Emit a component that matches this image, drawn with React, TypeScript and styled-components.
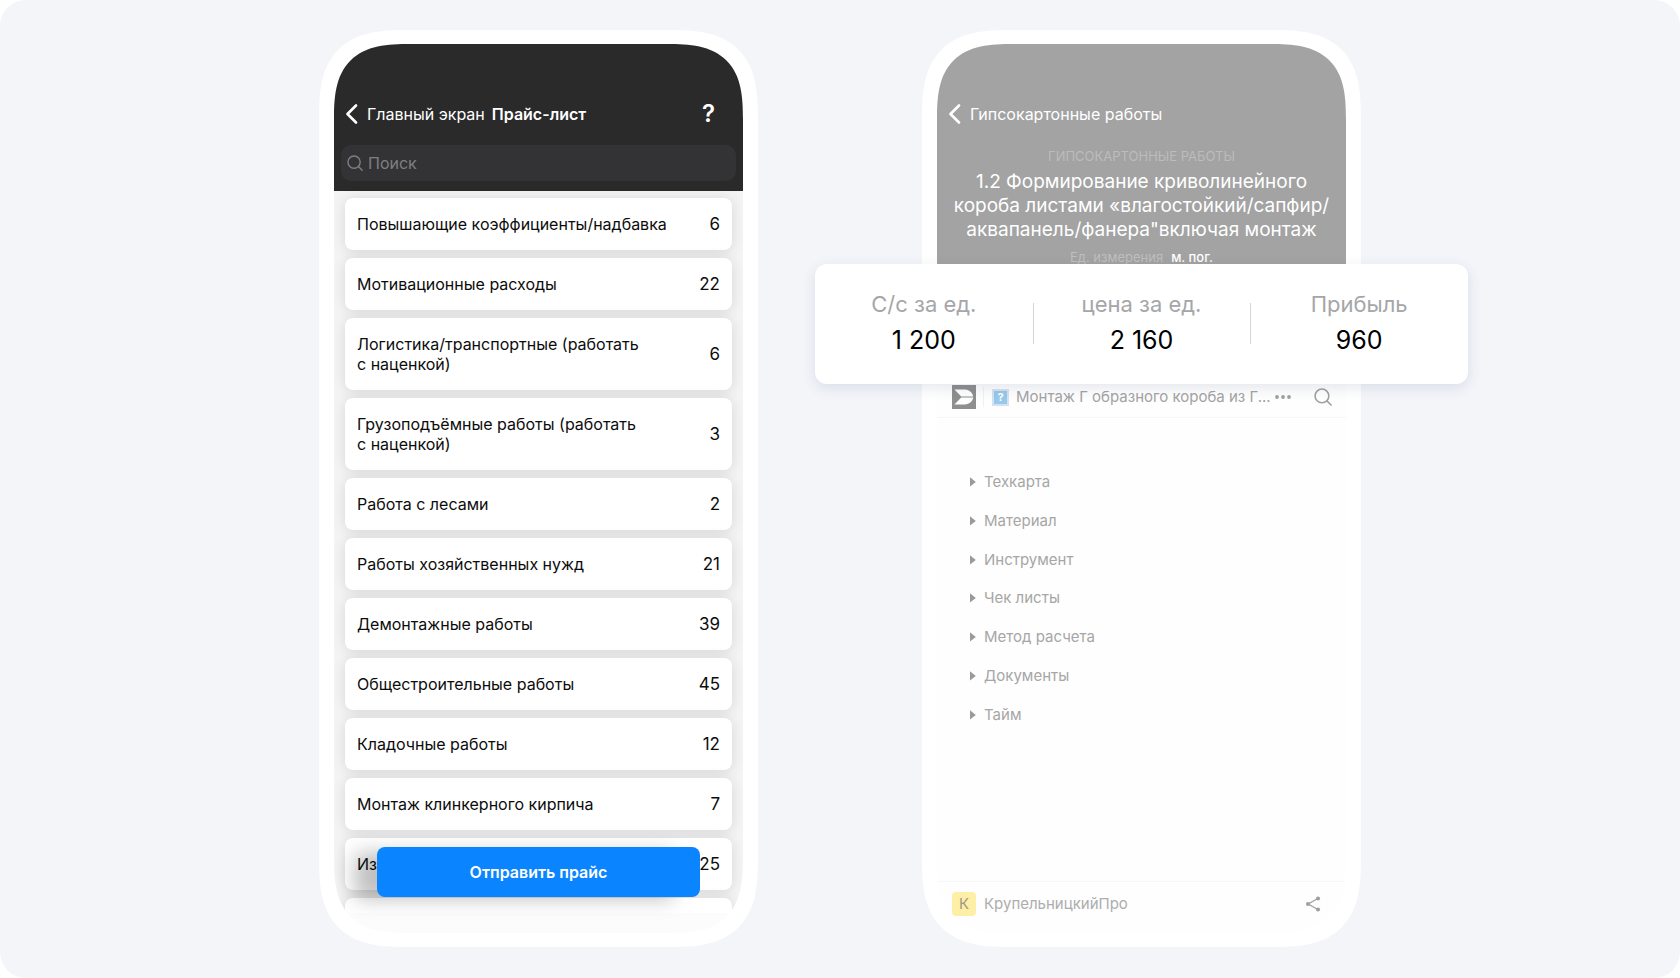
import React from 'react';
import styled, { createGlobalStyle } from 'styled-components';

const GlobalStyle = createGlobalStyle`
  *, *::before, *::after { box-sizing: border-box; }
  body { margin: 0; background: #ffffff; font-family: Inter, 'Liberation Sans', sans-serif; }
  button, input { font: inherit; color: inherit; border: 0; margin: 0; padding: 0; background: none; }
  ul { list-style: none; margin: 0; padding: 0; }
  h1, h2, p, dl, dt, dd { margin: 0; font-weight: 400; }
`;

const Stage = styled.main`
  display: flex;
  justify-content: center;
  align-items: flex-start;
  gap: 164px;
  min-height: 100vh;
  padding: 30px 24px;
  border-radius: 26px;
  background: #f3f5f9;
`;

const Phone = styled.section`
  position: relative;
  flex: 0 0 439px;
  padding: 14px 15px;
  border-radius: 70px;
  background: #ffffff;
  @supports (corner-shape: superellipse(1.5)) {
    border-radius: 90px;
    corner-shape: superellipse(1.5);
  }
`;

const Screen = styled.div<{ $bg: string }>`
  position: relative;
  display: flex;
  flex-direction: column;
  height: 889px;
  overflow: hidden;
  border-radius: 56px;
  background: ${(p) => p.$bg};
  @supports (corner-shape: superellipse(1.5)) {
    border-radius: 76px;
    corner-shape: superellipse(1.5);
  }
`;

const Header = styled.header<{ $bg: string; $height: number }>`
  flex: none;
  height: ${(p) => p.$height}px;
  padding-top: 48px;
  background: ${(p) => p.$bg};
  color: #ffffff;
`;

const NavBar = styled.nav`
  display: flex;
  align-items: center;
  height: 44px;
  padding: 0 28px 0 11px;
  font-size: 16px;
`;

const BackButton = styled.button`
  display: flex;
  align-items: center;
  gap: 8px;
  line-height: 24px;
`;

const NavTitle = styled.h1`
  margin-left: 7px;
  font-size: 16px;
  line-height: 24px;
  font-weight: 600;
`;

const HelpButton = styled.button`
  margin-left: auto;
  font-size: 24px;
  line-height: 28px;
  font-weight: 600;
`;

const SearchBox = styled.label`
  display: flex;
  align-items: center;
  gap: 5px;
  height: 36px;
  margin: 9px 7px 0;
  padding: 0 6px;
  border-radius: 10px;
  background: #333335;
  color: #7f7f81;
`;

const SearchInput = styled.input`
  flex: 1;
  min-width: 0;
  font-size: 16px;
  line-height: 24px;
  outline: none;
  &::placeholder { color: #7f7f81; opacity: 1; }
`;

const PriceList = styled.ul`
  display: flex;
  flex-direction: column;
  gap: 8px;
  padding: 7px 11px;
`;

const PriceRow = styled.button`
  display: flex;
  align-items: center;
  justify-content: space-between;
  width: 100%;
  padding: 16px 12px;
  border-radius: 8px;
  background: #ffffff;
  box-shadow: 0 1px 14px rgba(0, 0, 0, 0.12);
  color: #0c0c0c;
  font-size: 16px;
  line-height: 20px;
  text-align: left;
`;

const PriceName = styled.span`
  min-height: 20px;
  white-space: pre-line;
`;

const PriceCount = styled.span`
  font-size: 17px;
`;

const BottomFade = styled.div`
  position: absolute;
  inset: auto 0 0;
  height: 20px;
  background: #fcfcfc;
`;

const SendButton = styled.button`
  position: absolute;
  left: 43px;
  right: 43px;
  bottom: 36px;
  height: 50px;
  border-radius: 8px;
  background: #0b84ff;
  box-shadow: -24px 4px 20px -2px rgba(0, 0, 0, 0.25);
  color: #ffffff;
  font-size: 16px;
  font-weight: 600;
`;

const WorkInfo = styled.div`
  padding: 10px 10px 0;
  text-align: center;
`;

const Category = styled.p`
  font-size: 13px;
  line-height: 20px;
  color: #bcbcbc;
  text-transform: uppercase;
`;

const WorkTitle = styled.h2`
  margin-top: 4px;
  font-size: 19px;
  line-height: 24px;
  white-space: pre;
`;

const UnitLine = styled.p`
  margin-top: 5px;
  font-size: 13px;
  line-height: 20px;
  color: #bfbfbf;
`;

const UnitValue = styled.span`
  margin-left: 8px;
  color: #ffffff;
  font-weight: 500;
`;

const Summary = styled.dl`
  position: absolute;
  z-index: 1;
  top: 234px;
  left: -107px;
  right: -107px;
  display: grid;
  grid-template-columns: repeat(3, 1fr);
  padding: 22px 0;
  border-radius: 12px;
  background: #ffffff;
  box-shadow: 0 4px 14px rgba(40, 60, 110, 0.12);
  text-align: center;
`;

const Stat = styled.div`
  position: relative;
  height: 76px;
  & + &::before {
    content: '';
    position: absolute;
    left: 0;
    top: 17px;
    height: 41px;
    border-left: 1px solid #d4d4d6;
  }
`;

const StatLabel = styled.dt`
  font-size: 22px;
  line-height: 36px;
  color: #a6a6a8;
`;

const StatValue = styled.dd`
  font-size: 25px;
  line-height: 36px;
  color: #000000;
`;

const DocBar = styled.div`
  display: flex;
  align-items: center;
  height: 43px;
  margin-top: 75px;
  padding: 2px 14px 0 15px;
  border-bottom: 1px solid #f6f6f6;
  color: #a3a3a3;
`;

const DocDivider = styled.span`
  width: 1px;
  height: 20px;
  margin: 0 8px 0 7px;
  background: #f1f1f1;
`;

const DocTitle = styled.span`
  flex: 1;
  min-width: 0;
  margin-left: 7px;
  overflow: hidden;
  white-space: nowrap;
  font-size: 15px;
  line-height: 20px;
`;

const DocActions = styled.div`
  display: flex;
  align-items: center;
  gap: 22px;
`;

const IconButton = styled.button`
  display: flex;
  flex: none;
  color: #a0a0a0;
`;

const Sections = styled.ul`
  display: grid;
  grid-auto-rows: 1fr;
  height: 271px;
  margin-top: 45px;
  padding-left: 33px;
`;

const SectionButton = styled.button`
  display: flex;
  align-items: center;
  gap: 8px;
  height: 100%;
  color: #a6a6a6;
  font-size: 15px;
  line-height: 20px;
`;

const Footer = styled.footer`
  display: flex;
  align-items: center;
  gap: 8px;
  margin-top: auto;
  padding: 10px 25px 17px 15px;
  border-top: 1px solid #f6f6f6;
  color: #adadad;
  font-size: 15px;
  line-height: 20px;
`;

const Avatar = styled.span`
  display: grid;
  place-items: center;
  width: 24px;
  height: 24px;
  border-radius: 4px;
  background: #fdf0a6;
  color: #9d9a86;
`;

const Push = styled.span`
  margin-left: auto;
  display: flex;
`;

const BackIcon = () => (
  <svg width="14" height="20" viewBox="0 0 14 20" fill="none" stroke="#fff" strokeWidth="2.6" strokeLinecap="round" strokeLinejoin="round" aria-hidden="true">
    <path d="M11 1.500 2.500 10 11 18.500" />
  </svg>
);

const SearchIcon = ({ size }: { size: number }) => (
  <svg width={size} height={size} viewBox="0 0 17 17" fill="none" stroke="currentColor" strokeWidth="1.5" strokeLinecap="round" aria-hidden="true">
    <circle cx="7.500" cy="7.500" r="6.500" />
    <path d="m12.200 12.200 3.900 3.900" />
  </svg>
);

const LogoIcon = () => (
  <svg width="24" height="24" viewBox="0 0 24 24" aria-hidden="true">
    <path fill="#8f8f8f" d="M0 0h24v24H0z" />
    <path fill="#fff" d="M2.500 4.500H13c4 0 7.500 3 8.200 6.900H9.200zM2.500 19.500H13c4 0 7.500-3 8.200-6.900H9.200z" />
  </svg>
);

const PageBadge = styled.span`
  display: grid;
  place-items: center;
  width: 17px;
  height: 17px;
  border: 2px solid #d3e2f0;
  background: #97c9ea;
  color: #ffffff;
  font-size: 11px;
  line-height: 12px;
  font-weight: 700;
`;

const DotsIcon = () => (
  <svg width="18" height="6" viewBox="0 0 18 6" fill="currentColor" aria-hidden="true">
    <circle cx="3" cy="3" r="1.900" />
    <circle cx="9" cy="3" r="1.900" />
    <circle cx="15" cy="3" r="1.900" />
  </svg>
);

const Triangle = () => (
  <svg width="6" height="10" viewBox="0 0 6 10" aria-hidden="true">
    <path fill="#9a9a9a" d="M0 .3v9.200L5.800 4.900z" />
  </svg>
);

const ShareIcon = () => (
  <svg width="16" height="16" viewBox="0 0 16 16" aria-hidden="true">
    <path d="M13 2.500 3 8l10 5.500" fill="none" stroke="#a0a0a0" strokeWidth="1.300" />
    <g fill="#a0a0a0">
      <circle cx="13" cy="2.500" r="2.100" />
      <circle cx="3" cy="8" r="2.100" />
      <circle cx="13" cy="13.500" r="2.100" />
    </g>
  </svg>
);

const prices: [string, number | null][] = [
  ['Повышающие коэффициенты/надбавка', 6],
  ['Мотивационные расходы', 22],
  ['Логистика/транспортные (работать\nс наценкой)', 6],
  ['Грузоподъёмные работы (работать\nс наценкой)', 3],
  ['Работа с лесами', 2],
  ['Работы хозяйственных нужд', 21],
  ['Демонтажные работы', 39],
  ['Общестроительные работы', 45],
  ['Кладочные работы', 12],
  ['Монтаж клинкерного кирпича', 7],
  ['Из', 25],
  ['', null],
];

const stats = [
  ['С/с за ед.', '1 200'],
  ['цена за ед.', '2 160'],
  ['Прибыль', '960'],
];

const sections = ['Техкарта', 'Материал', 'Инструмент', 'Чек листы', 'Метод расчета', 'Документы', 'Тайм'];

export default function App() {
  return (
    <>
      <GlobalStyle />
      <Stage>
        <Phone>
          <Screen $bg="#f4f4f4">
            <Header $bg="#2a2a2a" $height={147}>
              <NavBar>
                <BackButton type="button"><BackIcon />Главный экран</BackButton>
                <NavTitle>Прайс-лист</NavTitle>
                <HelpButton type="button">?</HelpButton>
              </NavBar>
              <SearchBox>
                <SearchIcon size={16} />
                <SearchInput type="text" placeholder="Поиск" aria-label="Поиск" />
              </SearchBox>
            </Header>
            <PriceList>
              {prices.map(([name, count]) => (
                <li key={name}>
                  <PriceRow type="button">
                    <PriceName>{name}</PriceName>
                    <PriceCount>{count}</PriceCount>
                  </PriceRow>
                </li>
              ))}
            </PriceList>
            <BottomFade />
            <SendButton type="button">Отправить прайс</SendButton>
          </Screen>
        </Phone>

        <Phone>
          <Screen $bg="#fefefe">
            <Header $bg="#a3a3a3" $height={256}>
              <NavBar>
                <BackButton type="button"><BackIcon />Гипсокартонные работы</BackButton>
              </NavBar>
              <WorkInfo>
                <Category>Гипсокартонные работы</Category>
                <WorkTitle>{'1.2 Формирование криволинейного\nкороба листами «влагостойкий/сапфир/\nаквапанель/фанера"включая монтаж'}</WorkTitle>
                <UnitLine>Ед. измерения<UnitValue>м. пог.</UnitValue></UnitLine>
              </WorkInfo>
            </Header>
            <DocBar>
              <LogoIcon />
              <DocDivider />
              <PageBadge>?</PageBadge>
              <DocTitle>Монтаж Г образного короба из Г...</DocTitle>
              <DocActions>
                <IconButton type="button" aria-label="Ещё"><DotsIcon /></IconButton>
                <IconButton type="button" aria-label="Найти"><SearchIcon size={18} /></IconButton>
              </DocActions>
            </DocBar>
            <Sections>
              {sections.map((name) => (
                <li key={name}>
                  <SectionButton type="button"><Triangle />{name}</SectionButton>
                </li>
              ))}
            </Sections>
            <Footer>
              <Avatar>К</Avatar>
              <span>КрупельницкийПро</span>
              <Push><IconButton type="button" aria-label="Поделиться"><ShareIcon /></IconButton></Push>
            </Footer>
          </Screen>
          <Summary>
            {stats.map(([label, value]) => (
              <Stat key={label}>
                <StatLabel>{label}</StatLabel>
                <StatValue>{value}</StatValue>
              </Stat>
            ))}
          </Summary>
        </Phone>
      </Stage>
    </>
  );
}
